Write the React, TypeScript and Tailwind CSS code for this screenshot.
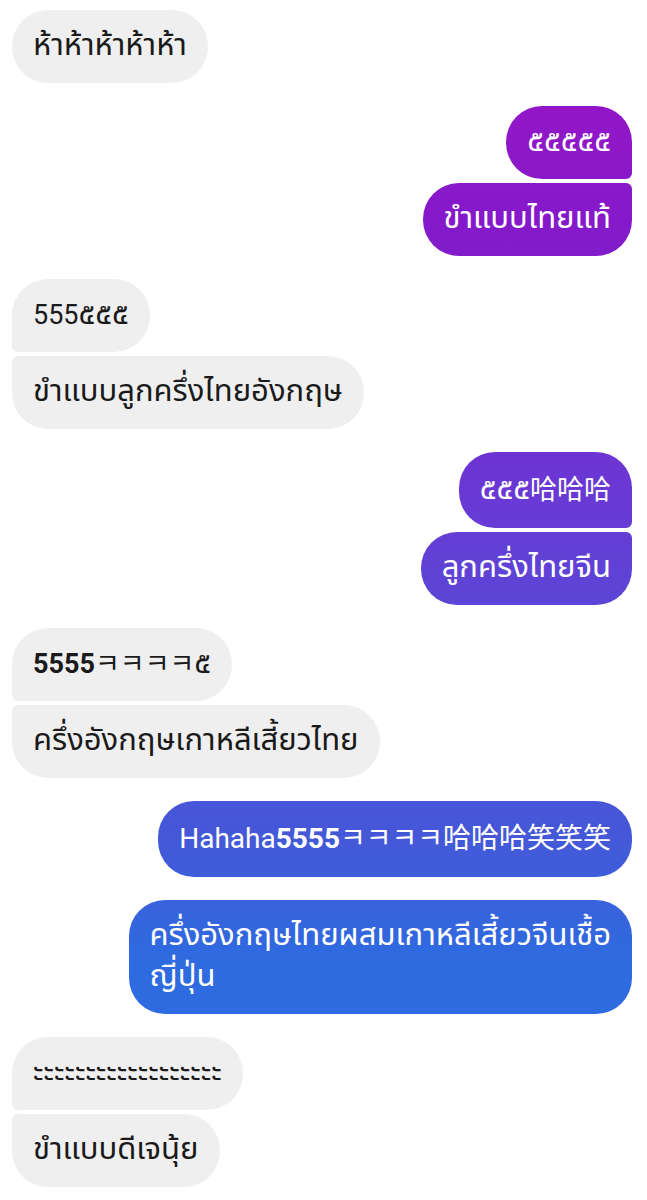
const font = { fontFamily: "Roboto, 'Noto Sans', 'Noto Sans Thai', 'Noto Sans CJK SC', sans-serif" };

type Pos = "single" | "first" | "last";

const Bubble = ({
  me,
  pos,
  tall,
  children,
}: {
  me?: boolean;
  pos: Pos;
  tall?: boolean;
  children: React.ReactNode;
}) => {
  let corners = "rounded-[36px]";
  if (me && pos === "first") corners = "rounded-[36px] rounded-br-[6px]";
  if (me && pos === "last") corners = "rounded-[36px] rounded-tr-[6px]";
  if (!me && pos === "first") corners = "rounded-[36px] rounded-bl-[6px]";
  if (!me && pos === "last") corners = "rounded-[36px] rounded-tl-[6px]";

  // messenger gradient is pinned to the screen, not the bubble
  const color = me
    ? "self-end text-white bg-fixed bg-[linear-gradient(180deg,#9c0fc6_0px,#8f18c8_140px,#8519ca_220px,#6a38d4_490px,#5f42d6_570px,#4458d8_838px,#2f6ae0_955px,#2a70e2_1200px)]"
    : "self-start text-[#1a1a1a] bg-[#efefef]";

  // bubbles with CJK glyphs come out a bit taller
  const pad = tall ? "py-[17.5px]" : "py-4";

  return (
    <div className={`${color} ${corners} ${pad} px-[21px] text-[27px] leading-[41px] whitespace-nowrap`}>
      {children}
    </div>
  );
};

// thai fallback font renders small, bump it (leading-none so the line box stays 41px)
const T = ({ children }: { children: React.ReactNode }) => (
  <span className="text-[31px] leading-none">{children}</span>
);

const Group = ({ children }: { children: React.ReactNode }) => (
  <div className="flex flex-col gap-[4px]">{children}</div>
);

export default function App() {
  return (
    <div className="bg-white min-h-[1200px] pl-3 pr-[15px] pt-[10px] flex flex-col gap-[23px]" style={font}>
      <Group>
        <Bubble pos="single"><T>ห้าห้าห้าห้าห้า</T></Bubble>
      </Group>
      <Group>
        <Bubble me pos="first"><T>๕๕๕๕๕</T></Bubble>
        <Bubble me pos="last"><T>ขำแบบไทยแท้</T></Bubble>
      </Group>
      <Group>
        <Bubble pos="first">555<T>๕๕๕</T></Bubble>
        <Bubble pos="last"><T>ขำแบบลูกครึ่งไทยอังกฤษ</T></Bubble>
      </Group>
      <Group>
        <Bubble me pos="first" tall><T>๕๕๕</T>哈哈哈</Bubble>
        <Bubble me pos="last"><T>ลูกครึ่งไทยจีน</T></Bubble>
      </Group>
      <Group>
        <Bubble pos="first">
          <b className="font-bold">5555</b>ㅋㅋㅋㅋ<T>๕</T>
        </Bubble>
        <Bubble pos="last"><T>ครึ่งอังกฤษเกาหลีเสี้ยวไทย</T></Bubble>
      </Group>
      <Group>
        <Bubble me pos="single" tall>
          <span className="text-[28px] leading-none">
            Hahaha<b className="font-bold">5555</b>ㅋㅋㅋㅋ哈哈哈笑笑笑
          </span>
        </Bubble>
      </Group>
      <Group>
        <Bubble me pos="single">
          <T>ครึ่งอังกฤษไทยผสมเกาหลีเสี้ยวจีนเชื้อ</T>
          <br />
          <T>ญี่ปุ่น</T>
        </Bubble>
      </Group>
      <Group>
        <Bubble pos="first"><T>ะะะะะะะะะะะะะะะะะะ</T></Bubble>
        <Bubble pos="last"><T>ขำแบบดีเจนุ้ย</T></Bubble>
      </Group>
    </div>
  );
}
